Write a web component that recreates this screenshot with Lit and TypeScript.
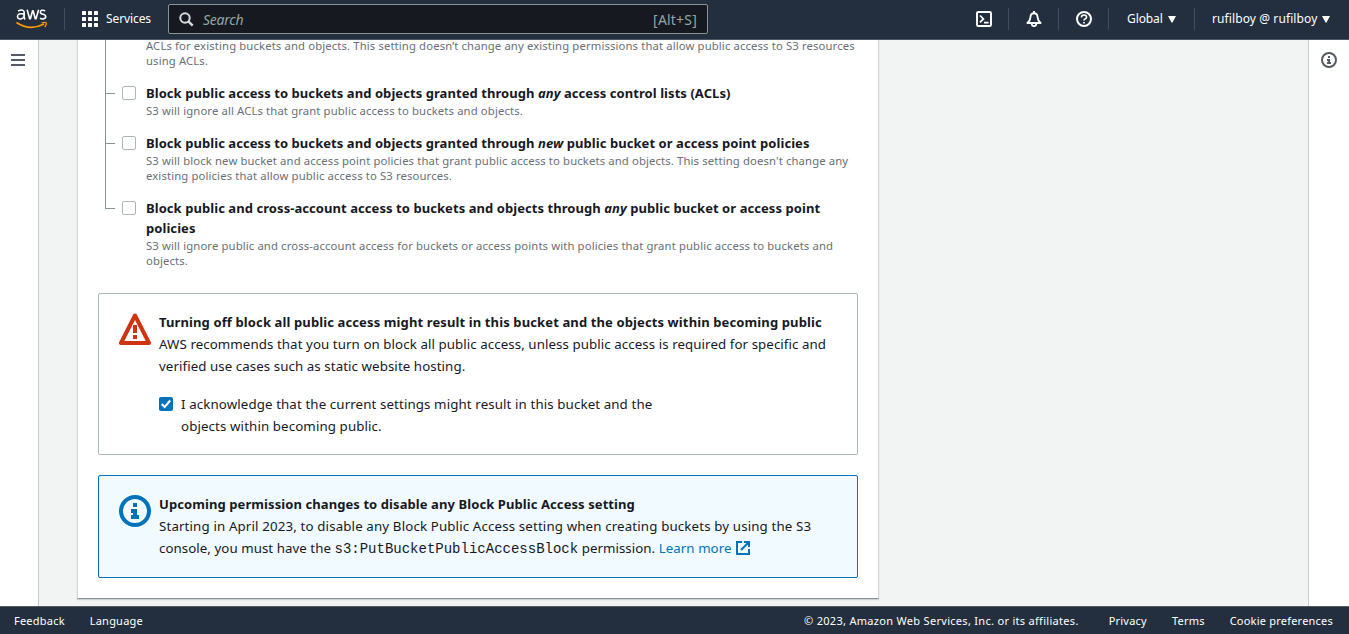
import { LitElement, html, css, svg } from "lit";
import { customElement, property } from "lit/decorators.js";

const shared = css`
  * { box-sizing: border-box; }
  svg { display: block; flex: none; }
`;

@customElement("top-bar")
class TopBar extends LitElement {
  static styles = [shared, css`
    :host { display: flex; align-items: flex-start; flex: none; height: 40px; background: #232f3e; border-bottom: 1px solid #4b5563; color: #fff; font-size: 12px; line-height: 16px; white-space: nowrap; }
    .logo { margin: 9px 17px 0 16px; }
    .sep { width: 1px; height: 22px; margin-top: 8px; background: #414d5c; flex: none; }
    .grid { margin: 11px 0 0 17px; }
    .services { margin: 11px 0 0 8px; width: 45px; letter-spacing: -.1px; }
    .search { display: flex; align-items: center; width: 540px; height: 30px; margin: 4px 0 0 17px; padding: 0 10px; background: #16191f; border: 1px solid #879596; border-radius: 2px; color: #95a5a6; font-size: 14px; }
    .hint { font-style: italic; margin: 2px 0 0 9px; flex: 1; letter-spacing: -.25px; }
    .key { margin-top: 2px; letter-spacing: .2px; }
    .tools { display: flex; margin-left: auto; }
    .tool { width: 49px; padding: 11px 0 0 17px; }
    .menu { display: flex; padding-top: 11px; }
    .global { width: 85px; padding-left: 18px; }
    .account { width: 154px; padding-left: 17px; }
    .global .label { width: 36px; letter-spacing: -.1px; }
    .account .label { width: 105px; letter-spacing: .1px; }
    .caret { margin: 5px 0 0 5px; }
  `];
  caret() {
    return html`<svg class="caret" width="8" height="7" viewBox="0 0 8 7"><path d="M0 0h8L4.6 6.3q-.6.8-1.2 0z" fill="#fff"/></svg>`;
  }
  render() {
    return html`
      <svg class="logo" width="31" height="21" viewBox="0 0 31 21" fill="none">
        <g stroke="#fff" stroke-width="1.6" stroke-linejoin="round">
          <path d="M2 2.1Q8.2-.6 8.2 3.8V8q0 1.4.8 2.4M8.1 5.1Q1.5 3.9 1.5 7.500c0 3.500 5.800 3.200 6.600-.6"/>
          <path d="M11.100.8l2.600 9h.7l2.200-8h.5l2.200 8h.7l2.600-9"/>
          <path d="M29.200 1.800Q24.400.2 24.400 3.200c0 2.900 5.300 1.300 5.300 4.300 0 3.200-4.600 2.600-5.600 1.700"/>
        </g>
        <path d="M.5 13.500q13.300 9 27.500 1.500" stroke="#f90" stroke-width="1.700"/>
        <path d="M25.700 13.900q3.800-.8 4.500 0t-1.500 4.200" stroke="#f90" stroke-width="1.300"/>
      </svg>
      <span class="sep"></span>
      <svg class="grid" width="16" height="16" fill="#fff">
        ${[0, 6, 12].map((y) => [0, 6, 12].map((x) => svg`<rect x=${x} y=${y} width="4" height="4" rx=".5"/>`))}
      </svg>
      <span class="services">Services</span>
      <div class="search">
        <svg width="15" height="15" viewBox="0 0 15 15" fill="none" stroke="#d5dbdb" stroke-width="2"><circle cx="6" cy="6" r="4.7"/><path d="M9.4 9.4l4.3 4.3" stroke-width="2.4"/></svg>
        <span class="hint">Search</span><span class="key">[Alt+S]</span>
      </div>
      <div class="tools">
        <span class="tool"><svg width="16" height="16" viewBox="0 0 16 16" fill="none" stroke="#fff" stroke-width="2"><rect x="1" y="1" width="14" height="14" rx="1.2"/><path d="M4 4.500l3.400 3.400L4 11.300M8 11.600h4.600" stroke-width="1.700"/></svg></span>
        <span class="sep"></span>
        <span class="tool"><svg width="16" height="16" viewBox="0 0 16 16" fill="none" stroke="#fff" stroke-width="1.900" stroke-linejoin="round"><path d="M8 0v2.500M1.400 12h13.200Q11.900 10 11.600 6.500C11.500 3.700 10 2.300 8 2.300S4.500 3.700 4.400 6.500Q4.100 10 1.400 12zM5.800 12v1.500Q6 15.100 8 15.100t2.200-1.600V12"/></svg></span>
        <span class="sep"></span>
        <span class="tool"><svg width="16" height="16" viewBox="0 0 16 16" fill="none" stroke="#fff" stroke-width="2"><circle cx="8" cy="8" r="7"/><path d="M5.500 6.400Q5.500 4 8 4t2.500 2.200Q10.500 7.400 9 8 8 8.400 8 9.600M8 10.900v1.600" stroke-width="1.700"/></svg></span>
        <span class="sep"></span>
        <span class="menu global"><span class="label">Global</span>${this.caret()}</span>
        <span class="sep"></span>
        <span class="menu account"><span class="label">rufilboy @ rufilboy</span>${this.caret()}</span>
      </div>`;
  }
}

@customElement("setting-row")
class SettingRow extends LitElement {
  @property({ attribute: false }) heading: unknown = null;
  @property({ attribute: false }) note: unknown = null;
  @property({ type: Boolean, reflect: true }) last = false;
  static styles = [shared, css`
    :host { display: flex; padding-bottom: 15px; white-space: nowrap; }
    .branch { width: 17px; flex: none; margin-bottom: -15px; border-left: 1px solid #879596; }
    .branch.last { height: 11px; margin: 0; }
    .twig { width: 9px; height: 1px; margin-top: 10px; background: #879596; }
    .box { width: 14px; height: 14px; flex: none; margin: 3px 10px 0 0; border: 1px solid #aab7b8; border-radius: 2px; background: #fff; }
    .empty { visibility: hidden; }
    .heading { font-weight: 700; font-size: 13px; line-height: 20px; color: #16191f; letter-spacing: .065px; }
    .note { font-size: 11.3px; line-height: 15px; color: #687078; letter-spacing: .125px; }
  `];
  render() {
    const titled = this.heading !== null;
    return html`
      <div class="branch ${this.last ? "last" : ""}">${titled ? html`<div class="twig"></div>` : null}</div>
      <span class="box ${titled ? "" : "empty"}"></span>
      <div>
        ${titled ? html`<div class="heading">${this.heading}</div>` : null}
        <div class="note">${this.note}</div>
      </div>`;
  }
}

@customElement("app-root")
class AppRoot extends LitElement {
  static styles = [shared, css`
    :host { display: flex; flex-direction: column; width: 100%; height: 634px; overflow: hidden; background: #f2f3f3; color: #16191f; font-family: "Noto Sans", "Open Sans", sans-serif; }
    .body { display: flex; flex: 1; min-height: 0; overflow: hidden; }
    .left { width: 39px; flex: none; background: #fff; border-right: 1px solid #c6cbcb; padding: 14px 0 0 11px; }
    .right { width: 41px; flex: none; margin-left: auto; background: #fff; border-left: 1px solid #c6cbcb; padding: 12px 0 0 12px; }
    .panel { width: 802px; height: 559px; flex: none; margin-left: 38px; padding: 0 20px; background: #fff; border: 1px solid #d0d5d5; border-top: 0; border-bottom: 1px solid #879596; box-shadow: 0 1px 1px rgba(0, 28, 36, .15); }
    .settings { margin: -2px 0 0 7px; }
    .alert { display: flex; gap: 8px; height: 162px; padding: 17px 20px; border: 1px solid #aab7b8; border-radius: 2px; font-size: 13px; line-height: 22px; white-space: nowrap; }
    .warning { margin-top: 10px; }
    .info { margin-top: 20px; height: 103px; border-color: #0073bb; background: #f1faff; }
    .icon { margin-top: 2px; }
    .title { font-weight: 700; letter-spacing: .12px; }
    .info .title { letter-spacing: .085px; }
    .copy { font-size: 13.3px; letter-spacing: .075px; }
    .ack .copy { letter-spacing: .11px; }
    .info .copy { letter-spacing: .14px; }
    .tail { letter-spacing: .05px; }
    .ack { display: flex; gap: 8px; margin-top: 16px; }
    .check { margin-top: 4px; }
    .code { font-family: "Liberation Mono", monospace; font-size: 14px; line-height: 1; letter-spacing: 0; }
    .link { color: #0073bb; }
    .ext { display: inline-block; vertical-align: -2px; margin-left: 4px; }
    .footer { display: flex; flex: none; height: 28px; background: #232f3e; border-top: 1px solid #545b64; color: #fff; font-size: 11px; line-height: 28px; padding: 0 16px 0 14px; white-space: nowrap; }
    .footer span { letter-spacing: .22px; }
    .footer .owner { letter-spacing: .3px; }
    .language { margin-left: 25px; }
    .legal { display: flex; margin-left: auto; }
    .privacy { margin-left: 30px; }
    .terms { margin-left: 25px; }
    .cookies { margin-left: 25px; }
  `];
  render() {
    return html`
      <top-bar></top-bar>
      <div class="body">
        <div class="left"><svg width="14" height="12" fill="#545b64"><path d="M0 0h14v2H0zM0 5h14v2H0zM0 10h14v2H0z"/></svg></div>
        <div class="panel">
          <div class="settings">
            <setting-row .note=${html`ACLs for existing buckets and objects. This setting doesn’t change any existing permissions that allow public access to S3 resources<br>using ACLs.`}></setting-row>
            <setting-row .heading=${html`Block public access to buckets and objects granted through <i>any</i> access control lists (ACLs)`} .note=${"S3 will ignore all ACLs that grant public access to buckets and objects."}></setting-row>
            <setting-row .heading=${html`Block public access to buckets and objects granted through <i>new</i> public bucket or access point policies`} .note=${html`S3 will block new bucket and access point policies that grant public access to buckets and objects. This setting doesn't change any<br>existing policies that allow public access to S3 resources.`}></setting-row>
            <setting-row last .heading=${html`Block public and cross-account access to buckets and objects through <i>any</i> public bucket or access point<br>policies`} .note=${html`S3 will ignore public and cross-account access for buckets or access points with policies that grant public access to buckets and<br>objects.`}></setting-row>
          </div>
          <div class="alert warning">
            <svg class="icon" width="32" height="32" viewBox="0 0 32 32"><path d="M16 2.500L2 30h28z" fill="none" stroke="#d13212" stroke-width="4" stroke-linejoin="round"/><path d="M14 12h4v8h-4zM14 22h4v4h-4z" fill="#d13212"/></svg>
            <div>
              <div class="title">Turning off block all public access might result in this bucket and the objects within becoming public</div>
              <div class="copy">AWS recommends that you turn on block all public access, unless public access is required for specific and<br>verified use cases such as static website hosting.</div>
              <div class="ack">
                <svg class="check" width="14" height="14"><rect width="14" height="14" rx="2" fill="#0073bb"/><path d="M2.700 7l3 3 5.500-6.500" fill="none" stroke="#fff" stroke-width="2"/></svg>
                <div class="copy">I acknowledge that the current settings might result in this bucket and the<br>objects within becoming public.</div>
              </div>
            </div>
          </div>
          <div class="alert info">
            <svg class="icon" width="32" height="32" viewBox="0 0 32 32"><circle cx="16" cy="16" r="14" fill="none" stroke="#0073bb" stroke-width="4"/><path d="M14 8h4v4h-4zM12 14h6v6h2v4h-8v-4h2v-2h-2z" fill="#0073bb"/></svg>
            <div>
              <div class="title">Upcoming permission changes to disable any Block Public Access setting</div>
              <div class="copy">Starting in April 2023, to disable any Block Public Access setting when creating buckets by using the S3<br><span class="tail">console, you must have the <span class="code">s3:PutBucketPublicAccessBlock</span> permission. <span class="link">Learn more<svg class="ext" width="14" height="14" viewBox="0 0 14 14" fill="none" stroke="#0073bb" stroke-width="2"><path d="M6 1H1v12h12V8M8 1h5v5M13 1L5 9"/></svg></span></span></div>
            </div>
          </div>
        </div>
        <div class="right"><svg width="16" height="16" viewBox="0 0 16 16"><circle cx="8" cy="8" r="7" fill="none" stroke="#545b64" stroke-width="2"/><path d="M7 4h2v2H7zM6 7h3v3h1v2H6v-2h1V9H6z" fill="#545b64"/></svg></div>
      </div>
      <div class="footer">
        <span>Feedback</span><span class="language">Language</span>
        <div class="legal"><span class="owner">© 2023, Amazon Web Services, Inc. or its affiliates.</span><span class="privacy">Privacy</span><span class="terms">Terms</span><span class="cookies">Cookie preferences</span></div>
      </div>`;
  }
}
